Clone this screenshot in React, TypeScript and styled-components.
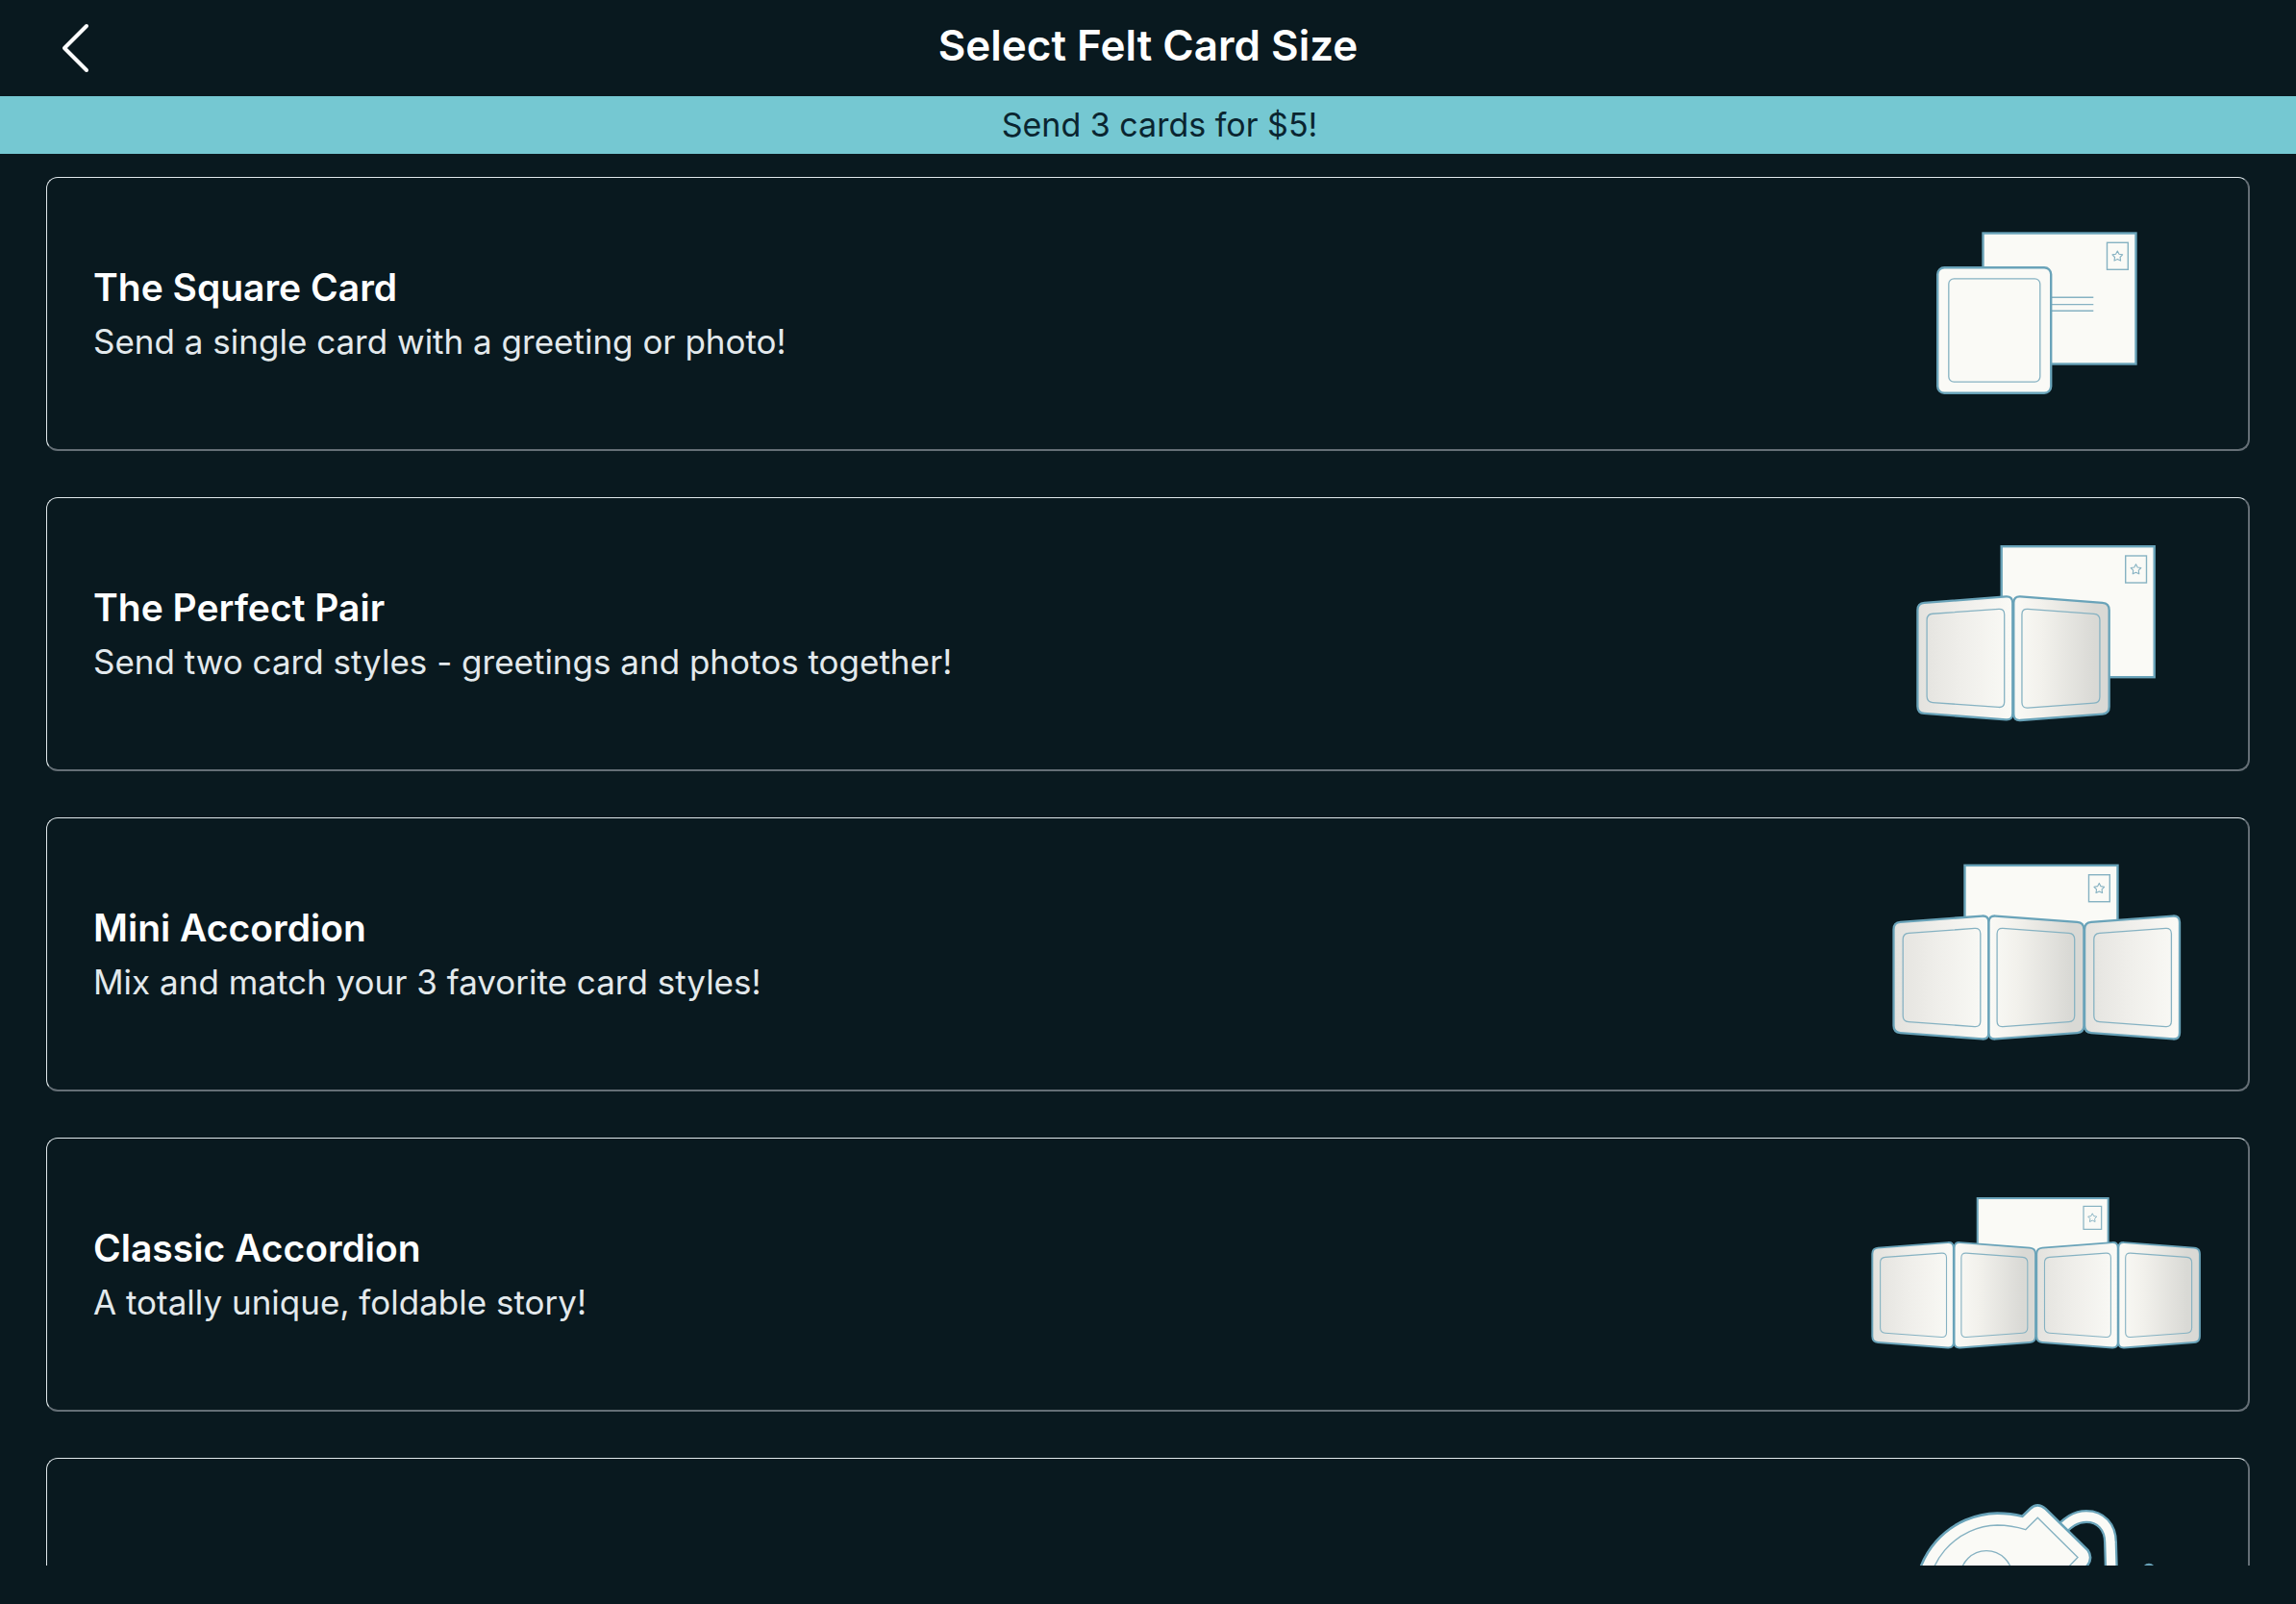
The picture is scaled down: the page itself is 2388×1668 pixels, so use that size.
import React from 'react';
import styled, { createGlobalStyle } from 'styled-components';

const color = {
  page: '#09191f',
  banner: '#75c8d2',
  bannerText: '#0a2530',
  title: '#ffffff',
  body: '#e3e9ec',
  edgeBright: '#e0e8eb',
  edgeDim: '#656f76',
  paper: '#fafaf6',
  shade: '#d9d9d5',
  line: '#69a3b9',
  fineLine: '#86b2c2',
};

const GlobalStyle = createGlobalStyle`
  *, *::before, *::after { box-sizing: border-box; }
  body {
    margin: 0;
    background: ${color.page};
    font-family: Inter, 'Liberation Sans', sans-serif;
  }
`;

const Screen = styled.div`
  display: flex;
  flex-direction: column;
  height: 100vh;
  padding-bottom: 40px;
  background: ${color.page};
`;

const Header = styled.header`
  display: grid;
  grid-template-columns: 1fr auto 1fr;
  align-items: center;
  flex: none;
  height: 100px;
  padding: 0 48px;
`;

const BackButton = styled.button`
  display: flex;
  align-items: center;
  justify-content: center;
  width: 60px;
  height: 60px;
  padding: 0;
  border: 0;
  background: none;
  cursor: pointer;
`;

const PageTitle = styled.h1`
  margin: 0;
  padding-bottom: 6px;
  color: ${color.title};
  font-size: 44px;
  font-weight: 600;
  line-height: 48px;
`;

const Banner = styled.p`
  flex: none;
  margin: 0;
  padding: 6px 0 6px 24px;
  background: ${color.banner};
  color: ${color.bannerText};
  font-size: 34px;
  line-height: 48px;
  text-align: center;
`;

const CardList = styled.main`
  display: flex;
  flex-direction: column;
  flex: 1;
  gap: 48px;
  min-height: 0;
  padding: 24px 48px 0;
  overflow-y: auto;
  scrollbar-width: none;
`;

const CardButton = styled.button`
  display: flex;
  align-items: center;
  justify-content: space-between;
  flex: none;
  width: 100%;
  min-height: 285px;
  padding: 21px 48px;
  border-style: solid;
  border-width: 1px 2px 2px 1px;
  border-color: ${color.edgeBright} ${color.edgeDim} ${color.edgeDim} ${color.edgeBright};
  border-radius: 12px;
  background: none;
  font-family: inherit;
  text-align: left;
  cursor: pointer;
`;

const CardText = styled.span`
  display: flex;
  flex-direction: column;
  gap: 8px;
  padding-top: 2px;
`;

const CardTitle = styled.span`
  color: ${color.title};
  font-size: 39px;
  font-weight: 600;
  line-height: 48px;
`;

const CardDescription = styled.span`
  color: ${color.body};
  font-size: 35px;
  font-weight: 400;
  line-height: 48px;
`;

const Artwork = styled.svg`
  display: block;
  flex: none;
  width: 344px;
  height: 240px;
`;

type Point = [number, number];

/* Closed polygon whose corners are rounded by radius r. */
function roundedPath(points: Point[], r: number): string {
  const toward = (from: Point, to: Point): string => {
    const dx = to[0] - from[0];
    const dy = to[1] - from[1];
    const d = Math.hypot(dx, dy);
    return `${from[0] + (dx * r) / d} ${from[1] + (dy * r) / d}`;
  };
  return (
    points
      .map((p, i) => {
        const prev = points[(i + points.length - 1) % points.length];
        const next = points[(i + 1) % points.length];
        return `${i ? 'L' : 'M'}${toward(p, prev)} Q${p[0]} ${p[1]} ${toward(p, next)}`;
      })
      .join(' ') + ' Z'
  );
}

function starPoints(cx: number, cy: number, outer: number, inner: number): string {
  return Array.from({ length: 10 }, (_, i) => {
    const a = -Math.PI / 2 + (i * Math.PI) / 5;
    const r = i % 2 ? inner : outer;
    return `${cx + r * Math.cos(a)},${cy + r * Math.sin(a)}`;
  }).join(' ');
}

function Envelope({ x, y, scale = 1, lines = false }: { x: number; y: number; scale?: number; lines?: boolean }) {
  return (
    <g transform={`translate(${x} ${y}) scale(${scale})`} fill={color.paper}>
      <rect x="1.2" y="1.2" width="159" height="136" stroke={color.line} strokeWidth="2.4" />
      <g stroke={color.fineLine} strokeWidth="1.4">
        <rect x="130.2" y="11" width="21.8" height="28" />
        <polygon points={starPoints(141, 25.3, 5.6, 2.9)} strokeWidth="1.1" strokeLinejoin="round" />
        {lines && <path d="M72 68H116M72 75.3H116M72 82H116" />}
      </g>
    </g>
  );
}

/* A folded panel; its tall edge is the crease that faces the viewer. */
function Panel({
  x,
  y,
  crease,
  fill,
  scale = 1,
}: {
  x: number;
  y: number;
  crease: 'left' | 'right';
  fill: string;
  scale?: number;
}) {
  const mirror = crease === 'left';
  const flip = (pts: Point[]): Point[] => (mirror ? pts.map(([px, py]): Point => [100 - px, py]) : pts);
  const outer = flip([
    [0.7, 8.5],
    [99.6, 1],
    [99.6, 130],
    [0.7, 122.5],
  ]);
  const inner = flip([
    [10.4, 19.8],
    [91, 14],
    [91, 117],
    [10.4, 111.2],
  ]);
  return (
    <g transform={`translate(${x} ${y}) scale(${scale})`}>
      <path d={roundedPath(outer, 7)} fill={`url(#${fill})`} stroke={color.line} strokeWidth="2.3" />
      <path d={roundedPath(inner, 6)} fill="none" stroke={color.fineLine} strokeWidth="1.3" />
    </g>
  );
}

const GradientSheet = styled.svg`
  position: absolute;
  width: 0;
  height: 0;
`;

function Gradients() {
  return (
    <GradientSheet aria-hidden="true">
      <defs>
        <linearGradient id="soft">
          <stop offset="0" stopColor="#e3e2de" />
          <stop offset="0.45" stopColor="#efeeea" />
          <stop offset="1" stopColor={color.paper} />
        </linearGradient>
        <linearGradient id="deep">
          <stop offset="0" stopColor={color.paper} />
          <stop offset="0.3" stopColor="#f2f1ec" />
          <stop offset="0.85" stopColor={color.shade} />
          <stop offset="1" stopColor={color.shade} />
        </linearGradient>
      </defs>
    </GradientSheet>
  );
}

function SquareCardArt() {
  return (
    <Artwork viewBox="0 0 344 240" aria-hidden="true">
      <Envelope x={115.3} y={35.3} lines />
      <rect x="69.2" y="72.2" width="118" height="130.6" rx="7" fill={color.paper} stroke={color.line} strokeWidth="2.4" />
      <rect x="80.8" y="83.8" width="95" height="107.4" rx="5.5" fill="none" stroke={color.fineLine} strokeWidth="1.3" />
    </Artwork>
  );
}

function PerfectPairArt() {
  return (
    <Artwork viewBox="0 0 344 240" aria-hidden="true">
      <Envelope x={134.5} y={28} />
      <Panel x={47.7} y={79.9} crease="right" fill="soft" />
      <Panel x={147.9} y={79.9} crease="left" fill="deep" scale={1.005} />
    </Artwork>
  );
}

function MiniAccordionArt() {
  return (
    <Artwork viewBox="0 1 344 240" aria-hidden="true">
      <Envelope x={96.3} y={27.7} />
      <Panel x={22.8} y={80} crease="right" fill="soft" />
      <Panel x={122.1} y={80} crease="left" fill="deep" />
      <Panel x={221.4} y={80} crease="right" fill="soft" />
    </Artwork>
  );
}

function ClassicAccordionArt() {
  const scale = 0.855;
  return (
    <Artwork viewBox="0 1 344 240" aria-hidden="true">
      <Envelope x={109.7} y={41} scale={scale} />
      <Panel x={0.7} y={86.8} scale={scale} crease="right" fill="soft" />
      <Panel x={86.2} y={86.8} scale={scale} crease="left" fill="deep" />
      <Panel x={171.6} y={86.8} scale={scale} crease="right" fill="soft" />
      <Panel x={257} y={86.8} scale={scale} crease="left" fill="deep" />
    </Artwork>
  );
}

function OrnamentArt() {
  const loop = 'M190 62 C205 44 214 40 224 40 C239 40 249 51 249 67 L250 100';
  return (
    <Artwork viewBox="0 1 344 240" aria-hidden="true">
      <path d={loop} fill="none" stroke={color.line} strokeWidth="14" />
      <path d={loop} fill="none" stroke={color.paper} strokeWidth="9.4" />
      <path
        d="M157.4 39.8 L165.5 32 Q173 24.6 181.5 32 L225.5 75 Q231 83 225 91 L216 100 A86.6 86.6 0 1 1 131.3 36.6 Q145 36.6 157.4 39.8 Z"
        fill={color.paper}
        stroke={color.line}
        strokeWidth="2.6"
      />
      <path
        d="M160.7 53.7 L173.3 41.2 L215 82.5 L202 96 A74 74 0 1 1 131.3 49 Q146 49 160.7 53.7 Z"
        fill="none"
        stroke={color.fineLine}
        strokeWidth="1.4"
      />
      <circle cx="120" cy="102.6" r="27" fill="none" stroke={color.fineLine} strokeWidth="1.4" />
      <circle cx="289" cy="96" r="6" fill={color.paper} stroke={color.line} strokeWidth="2.4" />
    </Artwork>
  );
}

type CardOption = {
  id: string;
  title?: string;
  description?: string;
  label?: string;
  Art: () => React.JSX.Element;
};

const options: CardOption[] = [
  {
    id: 'square',
    title: 'The Square Card',
    description: 'Send a single card with a greeting or photo!',
    Art: SquareCardArt,
  },
  {
    id: 'pair',
    title: 'The Perfect Pair',
    description: 'Send two card styles - greetings and photos together!',
    Art: PerfectPairArt,
  },
  {
    id: 'mini',
    title: 'Mini Accordion',
    description: 'Mix and match your 3 favorite card styles!',
    Art: MiniAccordionArt,
  },
  {
    id: 'classic',
    title: 'Classic Accordion',
    description: 'A totally unique, foldable story!',
    Art: ClassicAccordionArt,
  },
  { id: 'ornament', label: 'Ornament', Art: OrnamentArt },
];

export default function App() {
  return (
    <Screen>
      <GlobalStyle />
      <Gradients />
      <Header>
        <BackButton type="button" aria-label="Back">
          <svg width="60" height="60" viewBox="0 0 60 60" fill="none" aria-hidden="true">
            <path d="M42 7 L19 30 L42 53" stroke="#ffffff" strokeWidth="4" strokeLinecap="round" strokeLinejoin="round" />
          </svg>
        </BackButton>
        <PageTitle>Select Felt Card Size</PageTitle>
      </Header>
      <Banner>Send 3 cards for $5!</Banner>
      <CardList>
        {options.map(({ id, title, description, label, Art }) => (
          <CardButton key={id} type="button" aria-label={label}>
            <CardText>
              {title && <CardTitle>{title}</CardTitle>}
              {description && <CardDescription>{description}</CardDescription>}
            </CardText>
            <Art />
          </CardButton>
        ))}
      </CardList>
    </Screen>
  );
}
